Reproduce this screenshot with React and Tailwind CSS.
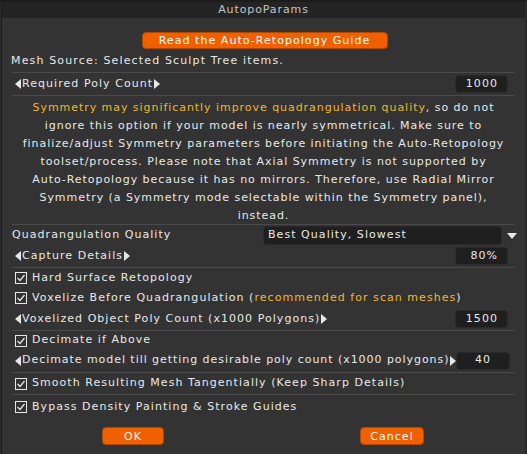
import React from 'react';

const font = { fontFamily: '"DejaVu Sans", "Liberation Sans", sans-serif' };

const Sep = () => <div className="mx-[10px] h-px shrink-0 bg-[#4a4a4a]" />;

const ArrowL = () => (
  <svg width="6" height="10" viewBox="0 0 6 10" className="mr-[1px] shrink-0">
    <path d="M6 0 L0 5 L6 10 Z" fill="#e8e8e8" />
  </svg>
);
const ArrowR = () => (
  <svg width="6" height="10" viewBox="0 0 6 10" className="ml-[1px] shrink-0">
    <path d="M0 0 L6 5 L0 10 Z" fill="#e8e8e8" />
  </svg>
);

const Box = ({ children, w = 'w-[53px]' }) => (
  <div className={`${w} h-[18px] shrink-0 rounded-[4px] bg-[#1f1f1f] border border-[#2a2a2a] flex items-center justify-end pr-[9px] text-[#e8e8e8]`}>
    {children}
  </div>
);

const Slider = ({ label, value, h = 'h-[20px]' }) => (
  <div className={`flex items-center shrink-0 ${h} pl-[13px] pr-[17px]`}>
    <ArrowL />
    <span className="whitespace-nowrap">{label}</span>
    <ArrowR />
    <div className="flex-1" />
    <Box>{value}</Box>
  </div>
);

const Check = ({ children, h = 'h-[21px]' }) => (
  <div className={`flex items-center shrink-0 ${h} pl-[13px]`}>
    <svg width="12" height="12" viewBox="0 0 12 12" className="mr-[5px] shrink-0">
      <rect x="0.5" y="0.5" width="11" height="11" fill="none" stroke="#e8e8e8" />
      <path d="M2.5 6 L5 8.5 L9.5 3" fill="none" stroke="#e8e8e8" strokeWidth="1.2" />
    </svg>
    <span className="whitespace-nowrap">{children}</span>
  </div>
);

const Y = ({ children }) => <span className="text-[#f2b531]">{children}</span>;

export default function App() {
  return (
    <div className="w-[527px] h-[454px] bg-[#2a2a2a] overflow-hidden" style={font}>
      <div className="h-[2px] bg-[#1c1c1c]" />
      <div className="h-[452px] ml-[1px] mr-[2px] border-l border-[#1e1e1e] bg-[#333333] flex flex-col text-[11px] tracking-[1.05px] text-[#e8e8e8]">
        <div className="h-[16px] shrink-0 bg-[#242424] flex items-center justify-center text-[#c4c4c4] tracking-[0.9px]">AutopoParams</div>
        <div className="h-[14px] shrink-0" />
        <div className="flex justify-center shrink-0">
          <button className="ml-[2px] w-[246px] h-[17px] rounded-[4px] bg-[#f06000] border border-[#b04800] text-white flex items-center justify-center leading-none">
            Read the Auto-Retopology Guide
          </button>
        </div>
        <div className="h-[23px] shrink-0 flex items-center pt-[2px] pl-[9px] tracking-[1.15px]">Mesh Source: Selected Sculpt Tree items.</div>
        <Sep />
        <Slider label="Required Poly Count" value="1000" h="h-[22px]" />
        <Sep />
        <div className="text-center leading-[18px] h-[128px] pt-[3px] shrink-0 tracking-[0.95px]">
          <div><Y>Symmetry may significantly improve quadrangulation quality</Y>, so do not</div>
          <div>ignore this option if your model is nearly symmetrical. Make sure to</div>
          <div>finalize/adjust Symmetry parameters before initiating the Auto-Retopology</div>
          <div>toolset/process. Please note that Axial Symmetry is not supported by</div>
          <div>Auto-Retopology because it has no mirrors. Therefore, use Radial Mirror</div>
          <div>Symmetry (a Symmetry mode selectable within the Symmetry panel),</div>
          <div>instead.</div>
        </div>
        <Sep />
        <div className="flex items-center shrink-0 h-[21px] pl-[10px] pr-[8px]">
          <span>Quadrangulation Quality</span>
          <div className="flex-1" />
          <div className="w-[239px] h-[19px] rounded-[4px] bg-[#1f1f1f] border border-[#2a2a2a] flex items-center pl-[4px]">Best Quality, Slowest</div>
          <svg width="10" height="6" viewBox="0 0 10 6" className="ml-[5px]">
            <path d="M0 0 L10 0 L5 6 Z" fill="#e8e8e8" />
          </svg>
        </div>
        <Slider label="Capture Details" value="80%" h="h-[20px]" />
        <div className="h-[1px] shrink-0" />
        <Sep />
        <Check h="h-[20px]">Hard Surface Retopology</Check>
        <Check h="h-[20px]">Voxelize Before Quadrangulation (<Y>recommended for scan meshes</Y>)</Check>
        <Slider label="Voxelized Object Poly Count (x1000 Polygons)" value="1500" h="h-[22px]" />
        <Sep />
        <Check h="h-[19px]">Decimate if Above</Check>
        <div className="flex items-center shrink-0 h-[21px] pl-[13px] pr-[17px] tracking-[0.95px]">
          <ArrowL />
          <span className="whitespace-nowrap">Decimate model till getting desirable poly count (x1000 polygons)</span>
          <ArrowR />
          <div className="flex-1" />
          <Box w="w-[54px]"><span className="mx-auto pl-[8px]">40</span></Box>
        </div>
        <div className="h-[1px] shrink-0" />
        <Sep />
        <Check h="h-[21px]">Smooth Resulting Mesh Tangentially (Keep Sharp Details)</Check>
        <Sep />
        <Check h="h-[24px]">Bypass Density Painting &amp; Stroke Guides</Check>
        <div className="h-[8px] shrink-0" />
        <div className="flex shrink-0">
          <button className="ml-[100px] w-[62px] h-[18px] rounded-[4px] bg-[#f06000] border border-[#b04800] text-white flex items-center justify-center leading-none">OK</button>
          <button className="ml-[196px] w-[64px] h-[18px] rounded-[4px] bg-[#f06000] border border-[#b04800] text-white flex items-center justify-center leading-none">Cancel</button>
        </div>
      </div>
    </div>
  );
}
